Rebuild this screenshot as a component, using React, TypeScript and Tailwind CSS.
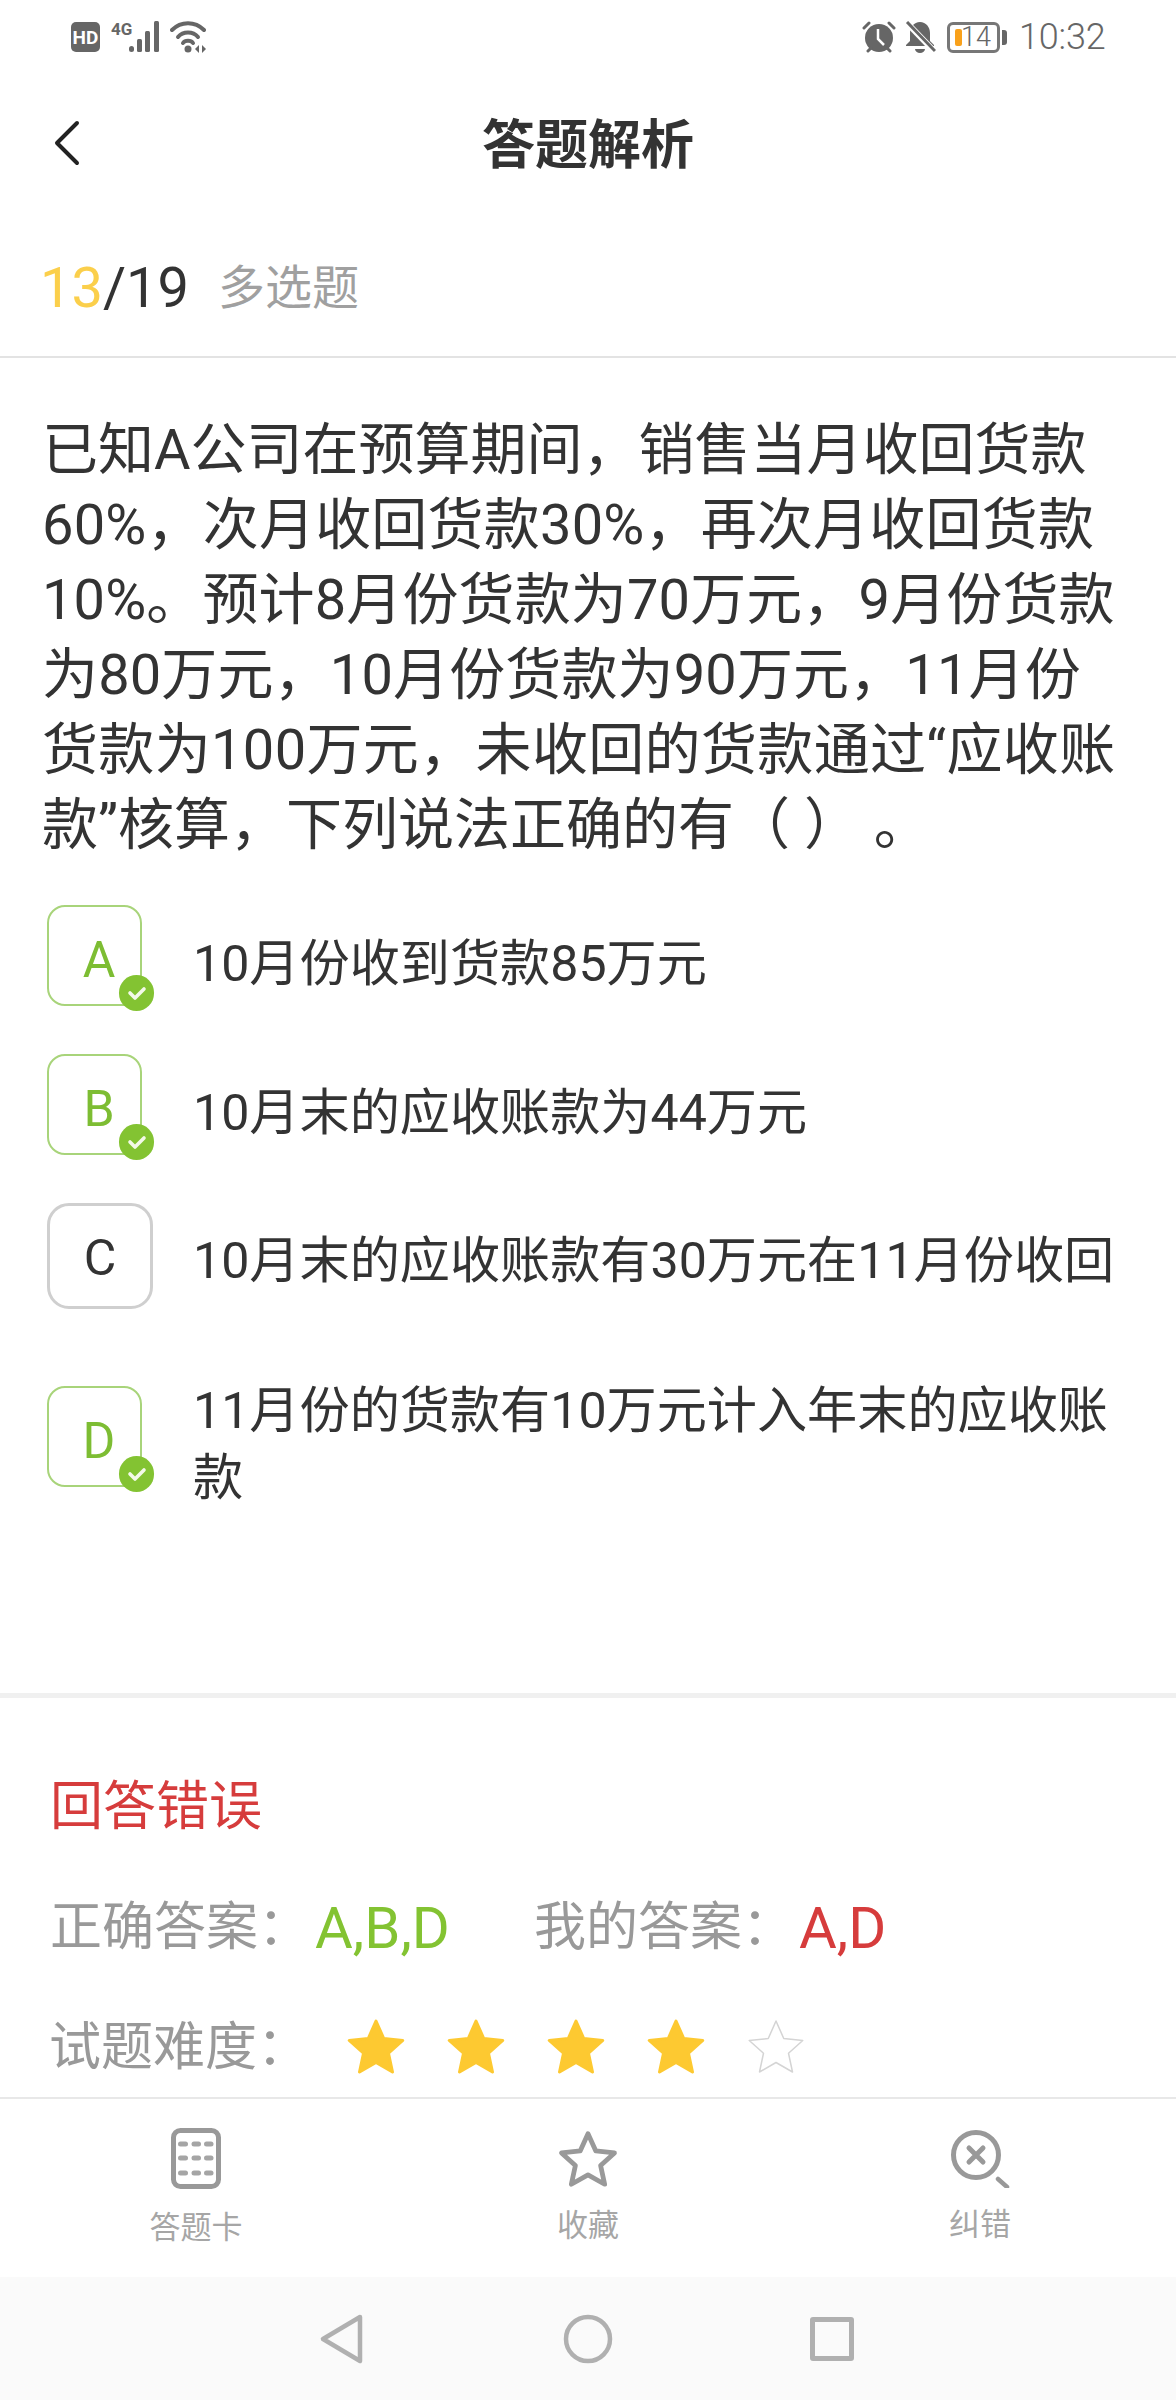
import { Fragment } from 'react';

const FONT = "font-['Roboto','Noto_Sans_CJK_SC',sans-serif]";

const questionLines = [
  { text: '已知A公司在预算期间，销售当月收回货款', spacing: '' },
  { text: '60%，次月收回货款30%，再次月收回货款', spacing: 'tracking-[0.2px]' },
  { text: '10%。预计8月份货款为70万元，9月份货款', spacing: 'tracking-[0.13px]' },
  { text: '为80万元，10月份货款为90万元，11月份', spacing: 'tracking-[0.14px]' },
  { text: '货款为100万元，未收回的货款通过“应收账', spacing: 'tracking-[0.35px]' },
  { text: '款”核算，下列说法正确的有（ ） 。', spacing: '' },
];

function StatusBar() {
  return (
    <div className="h-[74px] flex items-center justify-between pl-[71px] pr-[72px] text-[#666]">
      <div className="flex items-center">
        <div className="w-[29px] h-[30px] rounded-[5px] bg-[#666] text-white text-[19px] leading-none font-bold flex items-center justify-center">HD</div>
        <svg width="52" height="32" viewBox="0 0 52 32" className="ml-[11px]" fill="#666">
          <text x="0" y="14" fontSize="17" fontWeight="700" fontFamily="Roboto">4G</text>
          <rect x="18" y="25" width="5" height="6" rx="2.5" />
          <rect x="26" y="18" width="5" height="13" rx="1.5" />
          <rect x="34" y="10" width="5" height="21" rx="1.5" />
          <rect x="43" y="0" width="5" height="31" rx="1.5" />
        </svg>
        <svg width="38" height="32" viewBox="0 0 38 32" className="ml-[7px]" fill="none" stroke="#666" strokeWidth="4" strokeLinecap="round">
          <path d="M2 9C11 0 25 0 34 9" />
          <path d="M8 16C13 10 23 10 28 16" />
          <path d="M13 22C15 19 21 19 23 22" />
          <circle cx="18" cy="28" r="3.5" fill="#666" stroke="none" />
          <path d="M29 24l-4 4 4 4zM32 24l4 4-4 4z" fill="#666" stroke="none" />
        </svg>
      </div>
      <div className="flex items-center">
        <svg width="34" height="34" viewBox="0 0 34 34">
          <circle cx="17" cy="18" r="14" fill="#666" />
          <path d="M16 9v10l6 6" fill="none" stroke="#fff" strokeWidth="2.5" />
          <path d="M2 8l5-5M32 8l-5-5M6 31l3-3M28 31l-3-3" stroke="#666" strokeWidth="3" strokeLinecap="round" />
        </svg>
        <svg width="32" height="32" viewBox="0 0 32 32" className="ml-[8px]">
          <path d="M16 1c-6 0-10 5-10 11v8l-4 4v1h28v-1l-4-4v-8c0-6-4-11-10-11z" fill="#666" />
          <path d="M11 28a5 4 0 0 0 10 0z" fill="#666" />
          <path d="M3 2l28 29" stroke="#fff" strokeWidth="6" />
          <path d="M3 1l28 29" stroke="#666" strokeWidth="3" />
        </svg>
        <div className="ml-[11px] w-[53px] h-[31px] rounded-[6px] border-[3px] border-[#777] relative flex items-center justify-center text-[27px] leading-none font-light">
          <span className="absolute left-[5px] top-[4px] w-[7px] h-[17px] rounded-[2px] bg-[#f9a11b]" />
          <span className="relative pl-[5px]">14</span>
        </div>
        <div className="ml-[2px] w-[5px] h-[15px] rounded-r-[3px] bg-[#666]" />
        <div className="ml-[12px] w-[85px] text-[36px] leading-none font-light -tracking-[0.2px]">10:32</div>
      </div>
    </div>
  );
}

function Header() {
  return (
    <div className="h-[142px] flex items-center relative">
      <svg width="28" height="46" viewBox="0 0 28 46" className="ml-[52px] -mt-[4px]" fill="none" stroke="#222" strokeWidth="4" strokeLinecap="round" strokeLinejoin="round">
        <path d="M25 3L5 23l20 20" />
      </svg>
      <div className="absolute inset-x-0 pt-[3px] text-center text-[53px] font-bold text-[#333] leading-none">答题解析</div>
    </div>
  );
}

function Check() {
  return (
    <div className="absolute left-[70px] top-[68px] w-[35px] h-[36px] rounded-full bg-[#83c332] flex items-center justify-center">
      <svg width="20" height="16" viewBox="0 0 20 16" fill="none" stroke="#f3f9e8" strokeWidth="3.6" strokeLinecap="round" strokeLinejoin="round">
        <path d="M3 8l5 5 9-9" />
      </svg>
    </div>
  );
}

function Option({ letter, right, children, className }: { letter: string; right: boolean; children: React.ReactNode; className: string }) {
  return (
    <div className={`flex items-start pl-[47px] pr-[30px] ${className}`}>
      {right ? (
        <div className="relative shrink-0 w-[95px] h-[101px] rounded-[18px] border-2 border-[#a8d47a] text-[#7dbd33] text-[50px] flex items-center justify-center pl-[9px] pt-[10px]">
          {letter}
          <Check />
        </div>
      ) : (
        <div className="shrink-0 w-[106px] h-[106px] rounded-[22px] border-[3px] border-[#cfcfcf] text-[#333] text-[50px] flex items-center justify-center pt-[4px]">
          {letter}
        </div>
      )}
      <div className={`text-[50.15px] leading-[67px] text-[#333] ${right ? 'ml-[51px]' : 'ml-[40px]'}`}>{children}</div>
    </div>
  );
}

function Star({ on }: { on: boolean }) {
  return (
    <svg width="60" height="60" viewBox="0 0 24 24" className="shrink-0 mr-[40px]" fill={on ? '#fdc931' : 'none'} stroke={on ? '#fdc931' : '#d4d4d4'} strokeWidth={on ? 1.2 : 0.6} strokeLinejoin="round">
      <path d="M12 1.2l3.1 7 7.6.8-5.7 5.1 1.6 7.5L12 17.8l-6.6 3.8L7 14.1 1.3 9l7.6-.8z" />
    </svg>
  );
}

function BottomTabs() {
  return (
    <div className="h-[180px] border-t-2 border-[#e8e8e8] flex text-[#a6a6a6] text-[31px]">
      <div className="w-[392px] flex flex-col items-center pt-[29px]">
        <svg width="50" height="61" viewBox="0 0 50 61" fill="none">
          <rect x="2.5" y="2.5" width="45" height="56" rx="7" stroke="#999" strokeWidth="5" />
          {[16, 30, 45].map((y) => (
            <Fragment key={y}>
              <rect x="7" y={y - 2.5} width="10" height="5" rx="2.5" fill="#a5a5a5" />
              <rect x="20.5" y={y - 2.5} width="9.5" height="5" rx="2.5" fill="#a5a5a5" />
              <rect x="33" y={y - 2.5} width="9.5" height="5" rx="2.5" fill="#a5a5a5" />
            </Fragment>
          ))}
        </svg>
        <div className="mt-[19px] leading-[40px]">答题卡</div>
      </div>
      <div className="w-[392px] flex flex-col items-center pt-[31px]">
        <svg width="62" height="58" viewBox="0 0 24 23" fill="none" stroke="#999" strokeWidth="1.9" strokeLinejoin="round">
          <path d="M12 1.5l3.1 6.8 7.4.8-5.5 5 1.6 7.4L12 17.8l-6.6 3.7L7 14.1l-5.5-5 7.4-.8z" />
        </svg>
        <div className="mt-[18px] leading-[40px]">收藏</div>
      </div>
      <div className="w-[392px] flex flex-col items-center pt-[31px]">
        <svg width="60" height="58" viewBox="0 0 60 58" fill="none" stroke="#999" strokeLinecap="round">
          <circle cx="26" cy="25" r="22.5" strokeWidth="5" />
          <path d="M19 18l14 14M33 18L19 32" strokeWidth="5" />
          <path d="M48 49l9 8" strokeWidth="4.5" />
        </svg>
        <div className="mt-[17px] leading-[40px]">纠错</div>
      </div>
    </div>
  );
}

function NavBar() {
  return (
    <div className="h-[123px] bg-[#fafafa] flex items-center relative">
      <svg width="46" height="52" viewBox="0 0 46 52" className="ml-[319px]" fill="none" stroke="#b0b0b0" strokeWidth="4.5" strokeLinejoin="round">
        <path d="M41 4L4 26l37 22z" />
      </svg>
      <svg width="50" height="50" viewBox="0 0 50 50" className="ml-[198px]" fill="none" stroke="#b0b0b0" strokeWidth="4.5">
        <circle cx="25" cy="25" r="22" />
      </svg>
      <div className="ml-[197px] w-[44px] h-[44px] rounded-[3px] border-[5px] border-[#b0b0b0]" />
    </div>
  );
}

export default function App() {
  return (
    <div className={`w-[1176px] h-[2400px] bg-white flex flex-col overflow-hidden ${FONT}`}>
      <StatusBar />
      <Header />
      <div className="h-[142px] border-b-2 border-[#e3e3e3] flex items-center pl-[40px] pt-[3px]">
        <span className="text-[56px] text-[#fbcf4b] leading-none">13</span>
        <span className="text-[56px] text-[#333] leading-none">/19</span>
        <span className="ml-[29px] text-[47px] text-[#a0a0a0] leading-none">多选题</span>
      </div>
      <div className="flex-1 min-h-0 overflow-hidden">
        <div className="pt-[55px] pl-[42px] text-[56px] leading-[75px] text-[#333] whitespace-pre">
          {questionLines.map((line) => (
            <div key={line.text} className={line.spacing}>{line.text}</div>
          ))}
        </div>
        <Option letter="A" right className="mt-[42px]">
          <div className="mt-[25px]">10月份收到货款85万元</div>
        </Option>
        <Option letter="B" right className="mt-[48px]">
          <div className="mt-[25px]">10月末的应收账款为44万元</div>
        </Option>
        <Option letter="C" right={false} className="mt-[48px]">
          <div className="mt-[24px] whitespace-nowrap">10月末的应收账款有30万元在11月份收回</div>
        </Option>
        <Option letter="D" right className="mt-[77px]">
          <div className="w-[930px] -mt-[9px]">11月份的货款有10万元计入年末的应收账款</div>
        </Option>
        <div className="mt-[182px] h-[5px] bg-[#f0f0f0]" />
        <div className="mt-[79px] pl-[50px] text-[53px] leading-[60px] text-[#d63c3c]">回答错误</div>
        <div className="mt-[61px] pl-[50px] flex items-center text-[52px] leading-[60px]">
          <span className="text-[#999] w-[265px]">正确答案：</span>
          <span className="text-[#83c332] w-[219px] text-[58px]">A,B,D</span>
          <span className="text-[#999] w-[265px]">我的答案：</span>
          <span className="text-[#d63c3c] text-[58px]">A,D</span>
        </div>
        <div className="mt-[60px] pl-[49px] flex items-center text-[52px] leading-[60px] text-[#999]">
          <span className="w-[297px] shrink-0">试题难度：</span>
          {[true, true, true, true, false].map((on, i) => (
            <Star key={i} on={on} />
          ))}
        </div>
      </div>
      <BottomTabs />
      <NavBar />
    </div>
  );
}
